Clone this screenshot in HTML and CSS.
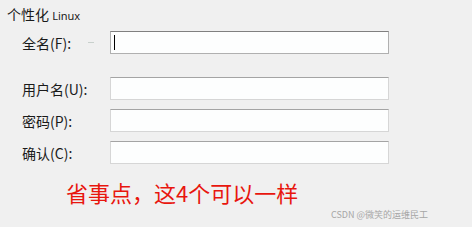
FILE: index.html
```html
<!DOCTYPE html>
<html lang="zh">
<head>
    <meta charset="UTF-8">
    <title>个性化 Linux</title>
    <link rel="stylesheet" href="styles.css">
</head>
<body>
    <div class="panel">
        <div class="title">个性化 <span class="title-en">Linux</span></div>

        <div class="row row-first">
            <label class="label">全名(F):</label>
            <span class="tick"></span>
            <div class="field focused"><span class="caret"></span></div>
        </div>

        <div class="group">
            <div class="row">
                <label class="label">用户名(U):</label>
                <div class="field"></div>
            </div>
            <div class="row">
                <label class="label">密码(P):</label>
                <div class="field"></div>
            </div>
            <div class="row">
                <label class="label">确认(C):</label>
                <div class="field"></div>
            </div>
        </div>

        <div class="note">省事点，这4个可以一样</div>
        <div class="mark">CSDN @微笑的运维民工</div>
    </div>
</body>
</html>
```

FILE: styles.css
```css
* {
    margin: 0;
    padding: 0;
    box-sizing: border-box;
}

body {
    background-color: #f0f0f0;
    color: #1a1a1a;
    font-family: "Noto Sans CJK SC", "Noto Sans", sans-serif;
    width: 472px;
    height: 227px;
    overflow: hidden;
}

.panel {
    padding: 4px 0 0 0;
}

.title {
    font-size: 14px;
    line-height: 20px;
    padding-left: 7px;
}

.title-en {
    font-size: 11px;
    font-family: "Noto Sans", sans-serif;
}

.row {
    display: flex;
    align-items: center;
    height: 23px;
}

.row-first {
    margin-top: 5px;
}

.label {
    width: 110px;
    padding-left: 22px;
    font-size: 14px;
}

.row-first .label {
    width: 88px;
}

.tick {
    width: 6px;
    height: 1px;
    background-color: #c8d0cc;
    margin-right: 16px;
}

.group {
    margin-top: 23px;
    display: flex;
    flex-direction: column;
    gap: 9px;
}

.field {
    width: 279px;
    height: 23px;
    background-color: #fdfefe;
    border: 1px solid #d6d6d6;
    border-top-color: #a4a4a4;
    display: flex;
    align-items: center;
    padding-left: 3px;
}

.field.focused {
    border-color: #b0b0b0;
    border-top-color: #808080;
}

.caret {
    width: 1px;
    height: 15px;
    background-color: #000;
}

.note {
    color: #e8160e;
    font-size: 22px;
    line-height: 28px;
    margin-top: 14px;
    padding-left: 66px;
}

.mark {
    color: #a6a6a6;
    font-size: 9px;
    text-align: right;
    padding-right: 44px;
    margin-top: 2px;
}
```
